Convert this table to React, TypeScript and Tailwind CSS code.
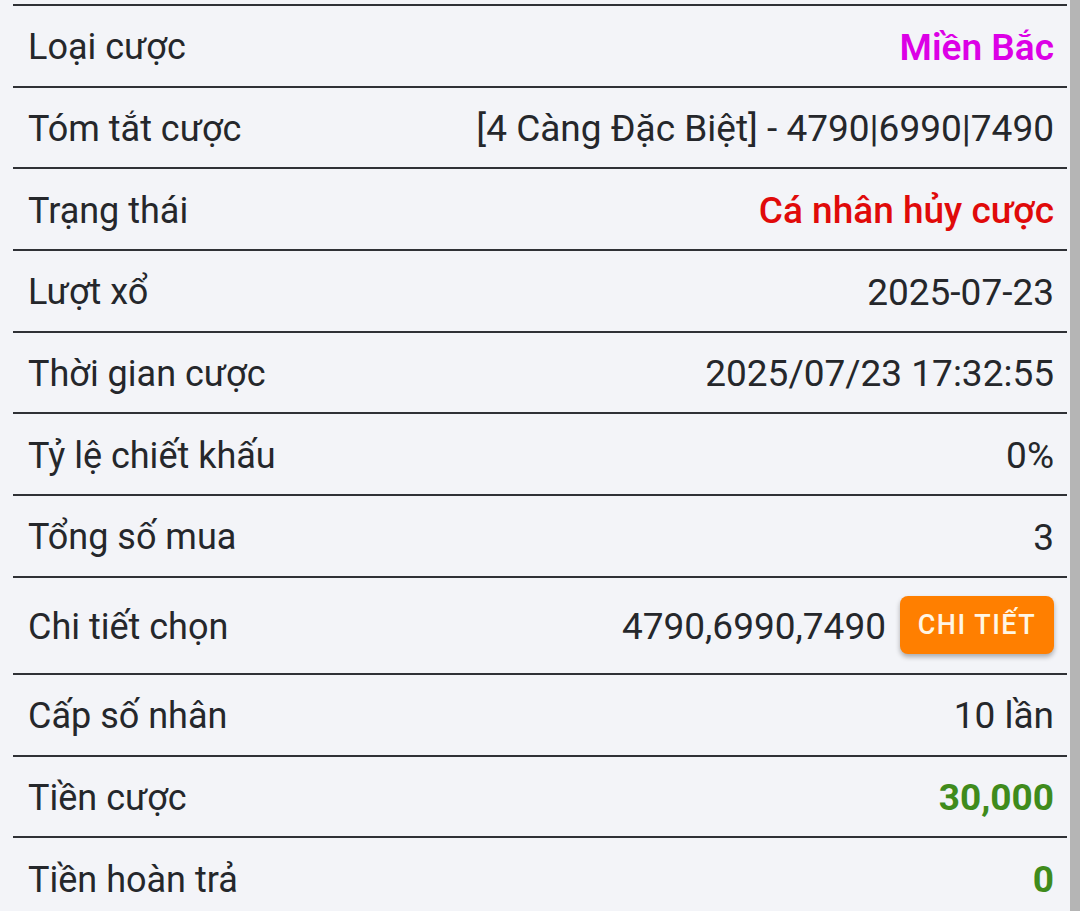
import React from 'react';

type Row = {
  label: string;
  value: string;
  valueClass?: string;
  detail?: boolean;
};

const rows: Row[] = [
  { label: 'Loại cược', value: 'Miền Bắc', valueClass: 'text-[#dc00e6] font-semibold' },
  { label: 'Tóm tắt cược', value: '[4 Càng Đặc Biệt] - 4790|6990|7490' },
  { label: 'Trạng thái', value: 'Cá nhân hủy cược', valueClass: 'text-[#e00a0a] font-medium' },
  { label: 'Lượt xổ', value: '2025-07-23' },
  { label: 'Thời gian cược', value: '2025/07/23 17:32:55' },
  { label: 'Tỷ lệ chiết khấu', value: '0%' },
  { label: 'Tổng số mua', value: '3' },
  { label: 'Chi tiết chọn', value: '4790,6990,7490', detail: true },
  { label: 'Cấp số nhân', value: '10 lần' },
  { label: 'Tiền cược', value: '30,000', valueClass: 'text-[#3f8b1c] font-bold' },
  { label: 'Tiền hoàn trả', value: '0', valueClass: 'text-[#3f8b1c] font-bold' },
];

const App = () => {
  return (
    <div
      className="flex h-[911px] w-full overflow-hidden bg-[#f3f4f8] text-[#25272b]"
      style={{ fontFamily: 'Roboto, "Noto Sans", sans-serif' }}
    >
      <main className="flex-1 pl-[13px] pr-[3px] pt-[4px]">
        {rows.map((row) => (
          <div
            key={row.label}
            className={`flex items-center justify-between border-t-2 border-[#2f3136] pl-[15px] pr-[13px] pt-[3px] ${
              row.detail ? 'h-[97px]' : 'h-[81.7px]'
            }`}
          >
            <span className="text-[36px]">{row.label}</span>
            <div className="flex items-center gap-[14px]">
              <span className={`text-[37px] ${row.valueClass ?? ''}`}>{row.value}</span>
              {row.detail && (
                <button className="-mt-[3px] h-[58px] w-[154px] rounded-[8px] bg-[#ff7f00] text-[27px] font-medium tracking-[1.5px] text-[#fff6e4] shadow-[0_3px_5px_rgba(0,0,0,0.3)]">
                  CHI TIẾT
                </button>
              )}
            </div>
          </div>
        ))}
      </main>
      <div className="w-[10px] shrink-0 bg-[#b5b5b5]" />
    </div>
  );
};

export default App;
